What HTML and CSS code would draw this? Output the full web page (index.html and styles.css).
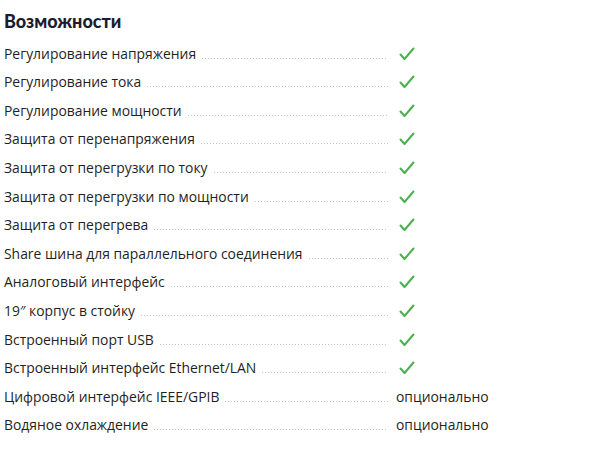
FILE: index.html
```html
<!DOCTYPE html>
<html lang="ru">
<head>
<meta charset="utf-8">
<link rel="stylesheet" href="styles.css">
</head>
<body>
<section class="features">
  <h2 class="title">Возможности</h2>
  <ul class="list">
    <li class="row"><span class="label">Регулирование напряжения</span><span class="leader"></span><span class="value"><svg class="check" viewBox="0 0 16 14"><path d="M1.5 7.5 L5.5 12 L14.5 1.5"/></svg></span></li>
    <li class="row"><span class="label">Регулирование тока</span><span class="leader"></span><span class="value"><svg class="check" viewBox="0 0 16 14"><path d="M1.5 7.5 L5.5 12 L14.5 1.5"/></svg></span></li>
    <li class="row"><span class="label">Регулирование мощности</span><span class="leader"></span><span class="value"><svg class="check" viewBox="0 0 16 14"><path d="M1.5 7.5 L5.5 12 L14.5 1.5"/></svg></span></li>
    <li class="row"><span class="label">Защита от перенапряжения</span><span class="leader"></span><span class="value"><svg class="check" viewBox="0 0 16 14"><path d="M1.5 7.5 L5.5 12 L14.5 1.5"/></svg></span></li>
    <li class="row"><span class="label">Защита от перегрузки по току</span><span class="leader"></span><span class="value"><svg class="check" viewBox="0 0 16 14"><path d="M1.5 7.5 L5.5 12 L14.5 1.5"/></svg></span></li>
    <li class="row"><span class="label">Защита от перегрузки по мощности</span><span class="leader"></span><span class="value"><svg class="check" viewBox="0 0 16 14"><path d="M1.5 7.5 L5.5 12 L14.5 1.5"/></svg></span></li>
    <li class="row"><span class="label">Защита от перегрева</span><span class="leader"></span><span class="value"><svg class="check" viewBox="0 0 16 14"><path d="M1.5 7.5 L5.5 12 L14.5 1.5"/></svg></span></li>
    <li class="row"><span class="label">Share шина для параллельного соединения</span><span class="leader"></span><span class="value"><svg class="check" viewBox="0 0 16 14"><path d="M1.5 7.5 L5.5 12 L14.5 1.5"/></svg></span></li>
    <li class="row"><span class="label">Аналоговый интерфейс</span><span class="leader"></span><span class="value"><svg class="check" viewBox="0 0 16 14"><path d="M1.5 7.5 L5.5 12 L14.5 1.5"/></svg></span></li>
    <li class="row"><span class="label">19″ корпус в стойку</span><span class="leader"></span><span class="value"><svg class="check" viewBox="0 0 16 14"><path d="M1.5 7.5 L5.5 12 L14.5 1.5"/></svg></span></li>
    <li class="row"><span class="label">Встроенный порт USB</span><span class="leader"></span><span class="value"><svg class="check" viewBox="0 0 16 14"><path d="M1.5 7.5 L5.5 12 L14.5 1.5"/></svg></span></li>
    <li class="row"><span class="label">Встроенный интерфейс Ethernet/LAN</span><span class="leader"></span><span class="value"><svg class="check" viewBox="0 0 16 14"><path d="M1.5 7.5 L5.5 12 L14.5 1.5"/></svg></span></li>
    <li class="row"><span class="label">Цифровой интерфейс IEEE/GPIB</span><span class="leader"></span><span class="value">опционально</span></li>
    <li class="row"><span class="label">Водяное охлаждение</span><span class="leader"></span><span class="value">опционально</span></li>
  </ul>
</section>
</body>
</html>
```

FILE: styles.css
```css
html, body {
  margin: 0;
  padding: 0;
  background: #ffffff;
}

body {
  font-family: "Open Sans", "Noto Sans", sans-serif;
  color: #1f1f24;
}

.features {
  padding: 9px 4px 0 4px;
}

.title {
  margin: 0 0 2px 0;
  font-family: "Lato", "Open Sans", sans-serif;
  font-weight: 900;
  font-size: 18px;
  line-height: 24px;
  color: #1b1d2e;
}

.list {
  list-style: none;
  margin: 0;
  padding: 0;
  width: 486px;
}

.row {
  display: flex;
  align-items: flex-end;
  height: 28.6px;
  font-size: 13.9px;
  line-height: 20px;
}

.label {
  white-space: nowrap;
  padding-right: 6px;
}

.leader {
  flex: 1 1 auto;
  height: 1px;
  margin-bottom: 5px;
  background-image: linear-gradient(to right, #c4c4d2 1px, transparent 1px);
  background-size: 3px 1px;
  background-repeat: repeat-x;
}

.value {
  flex: 0 0 102px;
  padding-left: 8px;
  box-sizing: border-box;
  display: flex;
  align-items: center;
  height: 20px;
}

.check {
  width: 16px;
  height: 14px;
  margin-left: 3px;
  fill: none;
  stroke: #4caf50;
  stroke-width: 2;
  stroke-linecap: round;
  stroke-linejoin: round;
}
```
